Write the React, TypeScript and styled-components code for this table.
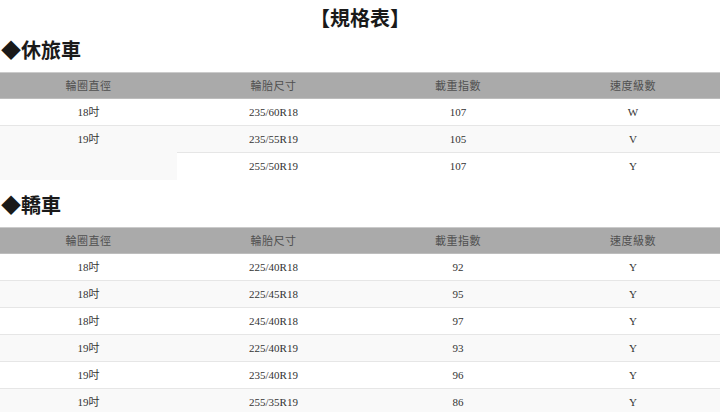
import React from "react";
import styled, { createGlobalStyle } from "styled-components";

const Global = createGlobalStyle`
  html, body { margin: 0; padding: 0; background: #fff; }
  body { font-family: "Noto Sans CJK TC", "Liberation Sans", sans-serif; color: #222; }
`;

const Page = styled.div`
  width: 720px;
  display: flex;
  flex-direction: column;
`;

const Title = styled.h1`
  margin: 0;
  padding-top: 4px;
  font-size: 20px;
  line-height: 28px;
  font-weight: 700;
  text-align: center;
  color: #1a1a1a;
`;

const Section = styled.section<{ $top: number }>`
  margin-top: ${(p) => p.$top}px;
  display: flex;
  flex-direction: column;
`;

const Heading = styled.h2`
  margin: 0 0 8px;
  padding-left: 1px;
  font-size: 20px;
  line-height: 28px;
  font-weight: 700;
  color: #1a1a1a;
`;

const Table = styled.table`
  width: 720px;
  table-layout: fixed;
  border-collapse: separate;
  border-spacing: 0;
`;

const HeadCell = styled.th`
  height: 25px;
  line-height: 25px;
  padding: 0;
  background: #aaaaaa;
  border-top: 1px solid #cbcbcb;
  border-bottom: 1px solid #bdbdbd;
  font-family: "Noto Sans CJK TC", sans-serif;
  font-size: 11px;
  letter-spacing: 0.5px;
  font-weight: 400;
  color: #505050;
  text-align: center;
`;

const Row = styled.tr<{ $alt: boolean }>`
  background: ${(p) => (p.$alt ? "#f9f9f9" : "#ffffff")};
`;

const Cell = styled.td<{ $last: boolean }>`
  height: ${(p) => (p.$last ? 27 : 26)}px;
  line-height: 26px;
  padding: 0;
  vertical-align: top;
  text-align: center;
  font-family: "Liberation Serif", "Noto Sans CJK TC", serif;
  font-size: 11px;
  color: #333;
  border-bottom: ${(p) => (p.$last ? "none" : "1px solid #e6e6e6")};
`;

const SpanCell = styled(Cell)`
  background: #f9f9f9;
`;

type RowData = { rim?: string; span?: number; skipRim?: boolean; size: string; load: string; speed: string };

const headers = ["輪圈直徑", "輪胎尺寸", "載重指數", "速度級數"];
const widths = [177, 193, 176, 174];

const suv: RowData[] = [
  { rim: "18吋", size: "235/60R18", load: "107", speed: "W" },
  { rim: "19吋", span: 2, size: "235/55R19", load: "105", speed: "V" },
  { skipRim: true, size: "255/50R19", load: "107", speed: "Y" },
];

const sedan: RowData[] = [
  { rim: "18吋", size: "225/40R18", load: "92", speed: "Y" },
  { rim: "18吋", size: "225/45R18", load: "95", speed: "Y" },
  { rim: "18吋", size: "245/40R18", load: "97", speed: "Y" },
  { rim: "19吋", size: "225/40R19", load: "93", speed: "Y" },
  { rim: "19吋", size: "235/40R19", load: "96", speed: "Y" },
  { rim: "19吋", size: "255/35R19", load: "86", speed: "Y" },
];

function SpecTable({ rows }: { rows: RowData[] }) {
  return (
    <Table>
      <colgroup>
        {widths.map((w, i) => (
          <col key={i} style={{ width: w }} />
        ))}
      </colgroup>
      <thead>
        <tr>
          {headers.map((h) => (
            <HeadCell key={h}>{h}</HeadCell>
          ))}
        </tr>
      </thead>
      <tbody>
        {rows.map((r, i) => {
          const last = i === rows.length - 1;
          return (
            <Row key={i} $alt={i % 2 === 1}>
              {r.skipRim ? null : r.span ? (
                <SpanCell rowSpan={r.span} $last={true}>
                  {r.rim}
                </SpanCell>
              ) : (
                <Cell $last={last}>{r.rim}</Cell>
              )}
              <Cell $last={last}>{r.size}</Cell>
              <Cell $last={last}>{r.load}</Cell>
              <Cell $last={last}>{r.speed}</Cell>
            </Row>
          );
        })}
      </tbody>
    </Table>
  );
}

export default function App() {
  return (
    <Page>
      <Global />
      <Title>【規格表】</Title>
      <Section $top={4}>
        <Heading>◆休旅車</Heading>
        <SpecTable rows={suv} />
      </Section>
      <Section $top={11}>
        <Heading>◆轎車</Heading>
        <SpecTable rows={sedan} />
      </Section>
    </Page>
  );
}
